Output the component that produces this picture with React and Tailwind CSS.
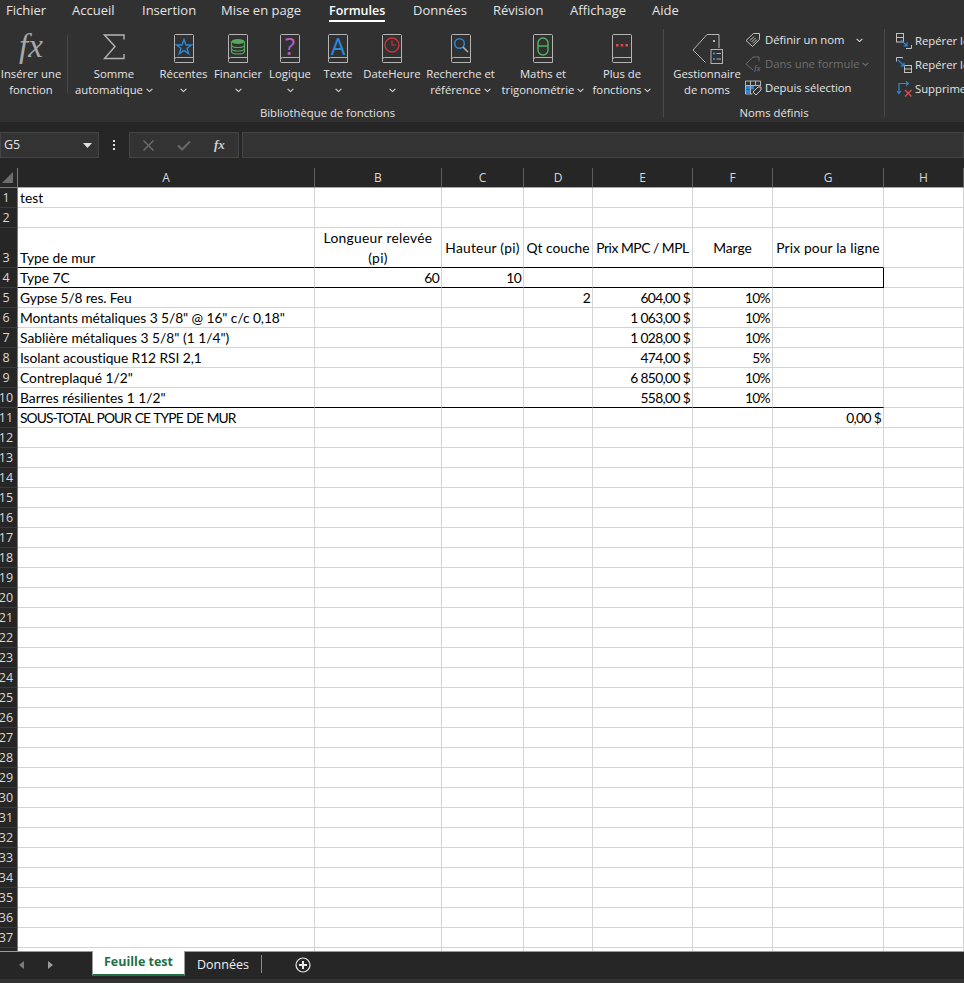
import React from "react";

const tabs = [
  { label: "Fichier", w: "w-[66px]" },
  { label: "Accueil", w: "w-[70px]" },
  { label: "Insertion", w: "w-[79px]" },
  { label: "Mise en page", w: "w-[108px]" },
  { label: "Formules", w: "w-[84px]", active: true },
  { label: "Données", w: "w-[80px]" },
  { label: "Révision", w: "w-[77px]" },
  { label: "Affichage", w: "w-[82px]" },
  { label: "Aide", w: "w-[40px]" },
];

const Chevron = ({ className = "" }) => (
  <svg width="7" height="5" viewBox="0 0 7 5" className={"inline-block shrink-0 " + className}>
    <path d="M.6.8 3.5 3.6 6.4.8" fill="none" stroke="#d8d8d8" strokeWidth="1.1" />
  </svg>
);

// livre de la galerie de fonctions
const Book = ({ children }) => (
  <svg width="22" height="30" viewBox="0 0 22 30">
    <path d="M1.5 26.5V2.5a1 1 0 0 1 1-1h17a1 1 0 0 1 1 1v27h-18a1 1 0 0 1-1-1v-2a2 2 0 0 1 2-2h17" fill="none" stroke="#b4b4b4" strokeWidth="1" />
    {children}
  </svg>
);

const icons = {
  fx: (
    <span className="h-[30px] font-['Liberation_Serif',serif] italic text-[33px] leading-[26px] text-[#a8a8a8]">fx</span>
  ),
  sigma: (
    <svg width="22" height="28" viewBox="0 0 22 28">
      <path d="M21 6.500V2H1.500L12 13.500 1.500 25.500H21V21" fill="none" stroke="#b4b4b4" strokeWidth="1.400" />
    </svg>
  ),
  star: (
    <Book>
      <path d="M11 6.500 13 12h5.500l-4.500 3.300 1.700 5.500-4.700-3.400-4.700 3.400L8 15.300 3.500 12H9z" fill="none" stroke="#2b88d8" strokeWidth="1.400" />
    </Book>
  ),
  db: (
    <Book>
      <ellipse cx="11" cy="8.500" rx="6.500" ry="2.500" fill="#55a85a" />
      <path d="M4.500 8.500v10c0 1.500 3 2.500 6.500 2.500s6.500-1 6.500-2.500v-10M4.500 12c0 1.500 3 2.500 6.500 2.500s6.500-1 6.500-2.500M4.500 15.500c0 1.500 3 2.500 6.500 2.500s6.500-1 6.500-2.500" fill="none" stroke="#55a85a" strokeWidth="1.200" />
    </Book>
  ),
  question: (
    <Book>
      <text x="11" y="22" textAnchor="middle" fontSize="23" fontFamily="Noto Sans, sans-serif" fill="#b55fc4">?</text>
    </Book>
  ),
  letter: (
    <Book>
      <text x="11" y="22" textAnchor="middle" fontSize="23" fontFamily="Noto Sans, sans-serif" fill="#2b88d8">A</text>
    </Book>
  ),
  clock: (
    <Book>
      <circle cx="11" cy="12" r="7" fill="none" stroke="#d13438" strokeWidth="1.300" />
      <path d="M11 7.500V12h4" fill="none" stroke="#d13438" strokeWidth="1.200" />
    </Book>
  ),
  search: (
    <Book>
      <circle cx="9.500" cy="10.500" r="4.800" fill="none" stroke="#2b88d8" strokeWidth="1.500" />
      <path d="m13 14 5 5" stroke="#b4b4b4" strokeWidth="1.500" />
    </Book>
  ),
  theta: (
    <Book>
      <rect x="6" y="5" width="10" height="17" rx="5" fill="none" stroke="#55b562" strokeWidth="1.400" />
      <path d="M6 13h10" stroke="#55b562" strokeWidth="1.400" />
    </Book>
  ),
  dots: (
    <Book>
      <path d="M5 11h2.500v2.500H5zM9.700 11h2.500v2.500H9.700zM14.500 11H17v2.500h-2.500z" fill="#e04a4a" />
    </Book>
  ),
  names: (
    <svg width="32" height="32" viewBox="0 0 32 32">
      <path d="M16 1.500H28V15M16 1.500 2 17l12.500 12.500" fill="none" stroke="#b4b4b4" strokeWidth="1" />
      <rect x="22" y="7" width="2" height="2" fill="#b4b4b4" />
      <rect x="20" y="16.500" width="11.500" height="14" fill="#313131" stroke="#b4b4b4" />
      <path d="M22 19.500h2v2h-2zM22 25h2v2h-2z" fill="#2b88d8" />
      <path d="M25.500 20.500H30M25.500 26H30" stroke="#b4b4b4" />
    </svg>
  ),
};

const buttons = [
  { icon: "fx", lines: ["Insérer une", "fonction"], w: "w-[62px]", noCaret: true },
  { sep: true },
  { icon: "sigma", lines: ["Somme", "automatique"], w: "w-[82px]" },
  { icon: "star", lines: ["Récentes"], w: "w-[57px]" },
  { icon: "db", lines: ["Financier"], w: "w-[52px]" },
  { icon: "question", lines: ["Logique"], w: "w-[52px]" },
  { icon: "letter", lines: ["Texte"], w: "w-[44px]" },
  { icon: "clock", lines: ["DateHeure"], w: "w-[64px]" },
  { icon: "search", lines: ["Recherche et", "référence"], w: "w-[73px]" },
  { icon: "theta", lines: ["Maths et", "trigonométrie"], w: "w-[92px]" },
  { icon: "dots", lines: ["Plus de", "fonctions"], w: "w-[66px]" },
];

const RibbonButton = ({ icon, lines, w, noCaret }) => (
  <div className={"flex flex-col items-center shrink-0 " + w}>
    <div className="flex h-[36px] items-start justify-center pt-[3px]">{icons[icon]}</div>
    <div className="whitespace-nowrap text-center leading-[16px]">{lines[0]}</div>
    {lines[1] ? (
      <div className="flex items-center justify-center gap-[3px] whitespace-nowrap leading-[16px]">
        {lines[1]}
        {!noCaret && <Chevron />}
      </div>
    ) : (
      <div className="flex h-[16px] items-center justify-center">
        <Chevron />
      </div>
    )}
  </div>
);

const GroupSep = () => <div className="mt-[7px] h-[88px] w-px shrink-0 bg-[#4a4a4a]" />;

const smallNames = [
  {
    label: "Définir un nom",
    caret: "ml-[11px]",
    icon: (
      <svg width="16" height="16" viewBox="0 0 16 16">
        <path d="M1 8.500 8.500 1.500h6v6L7.500 14.500zM5 8.500l4-4M6.500 10l4-4M8 11.500l4-4" fill="none" stroke="#c0c0c0" strokeWidth="1" />
      </svg>
    ),
  },
  {
    label: "Dans une formule",
    disabled: true,
    caret: "ml-[2px] opacity-40",
    icon: (
      <svg width="17" height="16" viewBox="0 0 17 16">
        <path d="M8 14 1 8l7-7h6v4" fill="none" stroke="#6c6c6c" strokeWidth="1" />
        <text x="9" y="15" fontSize="9" fontStyle="italic" fontFamily="Liberation Serif, serif" fill="#7a7a7a">fx</text>
      </svg>
    ),
  },
  {
    label: "Depuis sélection",
    icon: (
      <svg width="17" height="16" viewBox="0 0 17 16">
        <path d="M.5 1h15v5M.5 1v13h7M.5 5.500h15M5.500 1v13M10.500 1v5" fill="none" stroke="#b4b4b4" strokeWidth="1" />
        <rect x="1" y="6" width="4" height="3.500" fill="#2b88d8" />
        <rect x="1" y="10" width="4" height="3.500" fill="#2b88d8" />
        <rect x="6" y="6" width="3" height="3.500" fill="#2b88d8" />
        <path d="m8 12 5-5h3v3l-5 5z" fill="#313131" stroke="#c8c8c8" />
      </svg>
    ),
  },
];

const smallAudit = [
  {
    label: "Repérer les antécédents",
    icon: (
      <svg width="18" height="16" viewBox="0 0 18 16">
        <rect x="1.500" y=".5" width="7" height="8.500" fill="none" stroke="#c0c0c0" />
        <path d="M1.500 4.500h7M11 15.500h5.500V12" fill="none" stroke="#c0c0c0" />
        <path d="m6 7 6 6M12 9.500V13H8.500" fill="none" stroke="#2b88d8" strokeWidth="1.200" />
      </svg>
    ),
  },
  {
    label: "Repérer les dépendants",
    icon: (
      <svg width="18" height="16" viewBox="0 0 18 16">
        <path d="M1.500 4.500v-4h6v1" fill="none" stroke="#c0c0c0" />
        <rect x="9.500" y="8.500" width="7" height="7" fill="none" stroke="#c0c0c0" />
        <path d="M9.500 12h7" stroke="#c0c0c0" />
        <path d="m3 3 6 6M9 5.500V9H5.500" fill="none" stroke="#2b88d8" strokeWidth="1.200" />
      </svg>
    ),
  },
  {
    label: "Supprimer les flèches",
    icon: (
      <svg width="18" height="16" viewBox="0 0 18 16">
        <path d="M4 12V2.500h9M2 10l2 2.500L6 10M11 .5l2.500 2L11 4.500" fill="none" stroke="#2b88d8" strokeWidth="1.200" />
        <path d="m10 9 6.500 6.500M16.500 9 10 15.500" stroke="#e04a4a" strokeWidth="1.400" />
      </svg>
    ),
  },
];

const columns = ["A", "B", "C", "D", "E", "F", "G", "H"];

// contenu des cellules : t = texte, fit = réglage de chasse pour coller à Calibri
const num = "tracking-[-0.65px]";
const cells = {
  1: { A: { t: "test" } },
  3: {
    A: { t: "Type de mur" },
    B: { t: "Longueur relevée (pi)", head: true, wrap: true, fit: "tracking-[0.3px]" },
    C: { t: "Hauteur (pi)", head: true, fit: "tracking-[0.25px]" },
    D: { t: "Qt couche", head: true },
    E: { t: "Prix MPC / MPL", head: true, fit: "tracking-[-0.45px]" },
    F: { t: "Marge", head: true },
    G: { t: "Prix pour la ligne", head: true, fit: "tracking-[0.15px]" },
  },
  4: { A: { t: "Type 7C" }, B: { t: "60", right: true, fit: num }, C: { t: "10", right: true, fit: num } },
  5: { A: { t: "Gypse 5/8 res. Feu", fit: "tracking-[-0.15px]" }, D: { t: "2", right: true, fit: num }, E: { t: "604,00 $", right: true, fit: num }, F: { t: "10%", right: true, fit: num } },
  6: { A: { t: 'Montants métaliques 3 5/8" @ 16" c/c 0,18"', fit: "tracking-[-0.07px]" }, E: { t: "1 063,00 $", right: true, fit: num }, F: { t: "10%", right: true, fit: num } },
  7: { A: { t: 'Sablière métaliques 3 5/8" (1 1/4")' }, E: { t: "1 028,00 $", right: true, fit: num }, F: { t: "10%", right: true, fit: num } },
  8: { A: { t: "Isolant acoustique R12 RSI 2,1", fit: "tracking-[-0.07px]" }, E: { t: "474,00 $", right: true, fit: num }, F: { t: "5%", right: true, fit: num } },
  9: { A: { t: 'Contreplaqué 1/2"' }, E: { t: "6 850,00 $", right: true, fit: num }, F: { t: "10%", right: true, fit: num } },
  10: { A: { t: 'Barres résilientes 1 1/2"' }, E: { t: "558,00 $", right: true, fit: num }, F: { t: "10%", right: true, fit: num } },
  11: { A: { t: "SOUS-TOTAL POUR CE TYPE DE MUR", fit: "tracking-[-0.9px] [word-spacing:1px]" }, G: { t: "0,00 $", right: true, fit: num } },
};

const rows = Array.from({ length: 38 }, (_, i) => i + 1);
const blackBottom = [3, 4, 10];

const Cell = ({ row, col }) => {
  const cell = cells[row]?.[col];
  const black = blackBottom.includes(row) && col !== "H";
  const boxRight = row === 4 && col === "G";
  let align = "items-end justify-start pl-[2px] leading-[18px]";
  if (cell?.right) align = "items-end justify-end pr-[2px] leading-[18px]";
  if (cell?.head) align = "items-center justify-center text-center px-[2px] leading-[20px]";
  return (
    <div
      className={
        "flex min-w-0 overflow-hidden border-r border-b bg-white " +
        align +
        (row === 3 ? " h-[40px]" : " h-[20px]") +
        (black ? " border-b-black" : " border-b-[#d4d4d4]") +
        (boxRight ? " border-r-black" : " border-r-[#d4d4d4]")
      }
    >
      <span className={(cell?.wrap ? "" : "whitespace-nowrap ") + (cell?.fit || "")}>{cell?.t}</span>
    </div>
  );
};

export default function App() {
  return (
    <div className="flex h-[983px] w-[964px] flex-col overflow-hidden bg-[#262626] font-['Open_Sans',sans-serif] text-[11.3px] text-[#e4e4e4]">
      {/* Onglets */}
      <div className="flex h-[22px] shrink-0 bg-[#313131] pl-[6px] text-[13px]">
        {tabs.map((tab) => (
          <div key={tab.label} className={"shrink-0 " + tab.w}>
            <div className={"inline-block h-[22px] leading-[21px] " + (tab.active ? "border-b-2 border-white text-[12.500px] font-semibold text-white" : "")}>
              {tab.label}
            </div>
          </div>
        ))}
      </div>

      {/* Ruban */}
      <div className="flex h-[100px] shrink-0 overflow-hidden bg-[#313131]">
        <div className="flex w-[663px] shrink-0 flex-col">
          <div className="flex h-[82px] pt-[8px]">
            {buttons.map((b, i) =>
              b.sep ? <div key={i} className="ml-[5px] mr-[5px] mt-[5px] h-[58px] w-px shrink-0 bg-[#4a4a4a]" /> : <RibbonButton key={i} {...b} />
            )}
          </div>
          <div className="pr-[8px] text-center leading-[18px]">Bibliothèque de fonctions</div>
        </div>
        <GroupSep />
        <div className="flex w-[220px] shrink-0 flex-col">
          <div className="flex h-[82px] pt-[8px]">
            <div className="ml-[8px]">
              <RibbonButton icon="names" lines={["Gestionnaire", "de noms"]} w="w-[70px]" noCaret />
            </div>
            <div className="-mt-[2px] ml-[3px] flex flex-col">
              {smallNames.map((item) => (
                <div key={item.label} className={"flex h-[24px] items-center " + (item.disabled ? "text-[#6f6f6f]" : "")}>
                  <div className="flex w-[20px] shrink-0">{item.icon}</div>
                  <span className="whitespace-nowrap">{item.label}</span>
                  {item.caret && <Chevron className={item.caret} />}
                </div>
              ))}
            </div>
          </div>
          <div className="text-center leading-[18px]">Noms définis</div>
        </div>
        <GroupSep />
        <div className="ml-[10px] flex flex-col pt-[7px]">
          {smallAudit.map((item) => (
            <div key={item.label} className="flex h-[24px] items-center whitespace-nowrap">
              <div className="flex w-[20px] shrink-0">{item.icon}</div>
              {item.label}
            </div>
          ))}
        </div>
      </div>

      {/* Barre de formule */}
      <div className="flex h-[46px] shrink-0 items-start pt-[10px]">
        <div className="flex h-[26px] w-[99px] shrink-0 items-center justify-between border border-[#444] bg-[#333] pl-[3px] pr-[6px] text-[12.500px]">
          G5
          <svg width="9" height="5" viewBox="0 0 9 5">
            <path d="M0 0h9L4.500 5z" fill="#e0e0e0" />
          </svg>
        </div>
        <div className="flex w-[30px] shrink-0 flex-col items-center gap-[2px] pt-[8px]">
          <div className="h-[2px] w-[2px] bg-[#ddd]" />
          <div className="h-[2px] w-[2px] bg-[#ddd]" />
          <div className="h-[2px] w-[2px] bg-[#ddd]" />
        </div>
        <div className="flex h-[26px] w-[110px] shrink-0 items-center border border-[#444] bg-[#333]">
          <svg width="11" height="11" viewBox="0 0 11 11" className="ml-[13px]">
            <path d="m.5.500 10 10M10.500.500l-10 10" stroke="#6a6a6a" strokeWidth="1.500" />
          </svg>
          <svg width="14" height="11" viewBox="0 0 14 11" className="ml-[23px]">
            <path d="m1 5.500 4 4 8-8" fill="none" stroke="#6a6a6a" strokeWidth="2" />
          </svg>
          <span className="ml-[23px] font-['Liberation_Serif',serif] text-[13px] font-bold italic text-[#d0d0d0]">fx</span>
        </div>
        <div className="ml-[3px] h-[26px] flex-1 border border-[#444] bg-[#333]" />
      </div>

      {/* Feuille */}
      <div className="h-[783px] shrink-0 overflow-hidden">
        <div className="grid grid-cols-[18px_297px_127px_82px_69px_100px_80px_111px_80px] font-['Lato',sans-serif] text-[13.800px] text-black">
          <div className="flex h-[20px] items-center justify-center border-r border-b border-[#7a7a7a] bg-[#262626]">
            <div className="h-0 w-0 translate-x-[-1px] border-b-[11px] border-l-[11px] border-b-[#6e6e6e] border-l-transparent" />
          </div>
          {columns.map((c) => (
            <div key={c} className="flex h-[20px] items-center justify-center border-r border-b border-b-[#a8a8a8] border-r-[#5e5e5e] bg-[#262626] font-['Open_Sans',sans-serif] text-[12px] text-[#d8d8d8]">
              {c}
            </div>
          ))}
          {rows.map((row) => (
            <React.Fragment key={row}>
              <div className={"flex items-end justify-center overflow-hidden border-r border-b border-b-[#3a3a3a] border-r-[#7a7a7a] bg-[#262626] pr-[5px] font-['Open_Sans',sans-serif] text-[12.500px] leading-[19px] text-[#d8d8d8] " + (row === 3 ? "h-[40px]" : "h-[20px]")}>
                {row}
              </div>
              {columns.map((c) => (
                <Cell key={c} row={row} col={c} />
              ))}
            </React.Fragment>
          ))}
        </div>
      </div>

      {/* Onglets de feuilles */}
      <div className="flex h-[28px] shrink-0 border-t border-[#9a9a9a] bg-[#262626]">
        <div className="flex w-[92px] shrink-0 items-center pb-[2px]">
          <div className="ml-[19px] h-0 w-0 border-y-[4px] border-r-[5px] border-y-transparent border-r-[#7a7a7a]" />
          <div className="ml-[24px] h-0 w-0 border-y-[4px] border-l-[5px] border-y-transparent border-l-[#9a9a9a]" />
        </div>
        <div className="-mt-px flex h-[25px] w-[93px] shrink-0 items-center justify-center border-x border-b-2 border-x-[#9a9a9a] border-b-[#1e7145] bg-white text-[12.500px] font-bold text-[#1e7145]">
          Feuille test
        </div>
        <div className="flex w-[76px] shrink-0 items-center justify-center text-[12.500px] text-[#f0f0f0]">Données</div>
        <div className="mt-[3px] h-[18px] w-px shrink-0 bg-[#8a8a8a]" />
        <div className="ml-[33px] flex h-[26px] items-center">
          <svg width="16" height="16" viewBox="0 0 16 16">
            <circle cx="8" cy="8" r="7" fill="none" stroke="#e8e8e8" strokeWidth="1.200" />
            <path d="M8 4v8M4 8h8" stroke="#e8e8e8" strokeWidth="2" />
          </svg>
        </div>
      </div>
      <div className="flex-1 bg-[#333]" />
    </div>
  );
}
